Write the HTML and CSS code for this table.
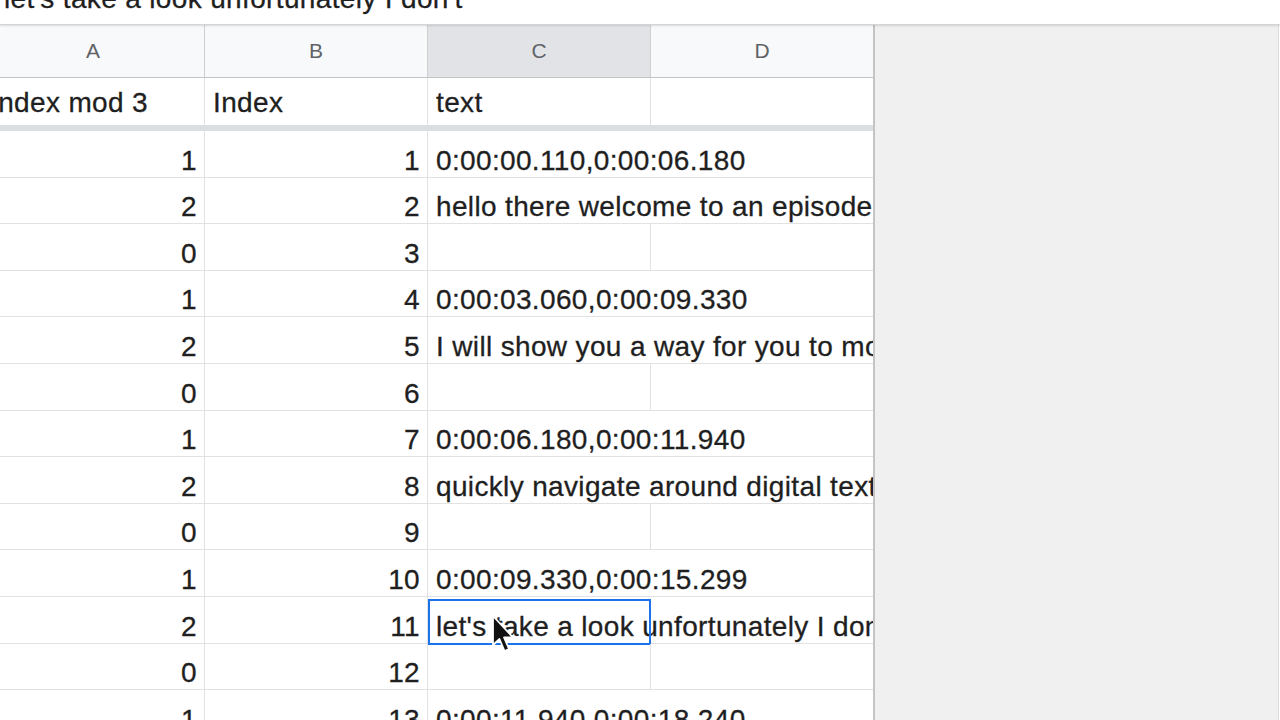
FILE: index.html
```html
<!DOCTYPE html>
<html>
<head>
<meta charset="utf-8">
<link rel="stylesheet" href="styles.css">
</head>
<body>
<div class="topbar"><div class="formula">let's take a look unfortunately I don't</div></div>
<div class="sheet">
  <div class="grid">
    <div class="row colhead"><div class="ch">A</div><div class="ch">B</div><div class="ch sel">C</div><div class="ch">D</div></div>
    <div class="row frozen"><div class="cell">Index mod 3</div><div class="cell">Index</div><div class="cell">text</div><div class="cell"></div></div>
    <div class="row"><div class="cell num">1</div><div class="cell num">1</div><div class="cell wide">0:00:00.110,0:00:06.180</div></div>
    <div class="row"><div class="cell num">2</div><div class="cell num">2</div><div class="cell wide">hello there welcome to an episode of</div></div>
    <div class="row"><div class="cell num">0</div><div class="cell num">3</div><div class="cell"></div><div class="cell"></div></div>
    <div class="row"><div class="cell num">1</div><div class="cell num">4</div><div class="cell wide">0:00:03.060,0:00:09.330</div></div>
    <div class="row"><div class="cell num">2</div><div class="cell num">5</div><div class="cell wide">I will show you a way for you to more</div></div>
    <div class="row"><div class="cell num">0</div><div class="cell num">6</div><div class="cell"></div><div class="cell"></div></div>
    <div class="row"><div class="cell num">1</div><div class="cell num">7</div><div class="cell wide">0:00:06.180,0:00:11.940</div></div>
    <div class="row"><div class="cell num">2</div><div class="cell num">8</div><div class="cell wide">quickly navigate around digital text</div></div>
    <div class="row"><div class="cell num">0</div><div class="cell num">9</div><div class="cell"></div><div class="cell"></div></div>
    <div class="row"><div class="cell num">1</div><div class="cell num">10</div><div class="cell wide">0:00:09.330,0:00:15.299</div></div>
    <div class="row"><div class="cell num">2</div><div class="cell num">11</div><div class="cell wide">let's take a look unfortunately I don't</div><div class="selbox"></div></div>
    <div class="row"><div class="cell num">0</div><div class="cell num">12</div><div class="cell"></div><div class="cell"></div></div>
    <div class="row"><div class="cell num">1</div><div class="cell num">13</div><div class="cell wide">0:00:11.940,0:00:18.240</div></div>
  </div>
  <div class="void"></div>
</div>
<svg class="cursor" width="24" height="40" viewBox="0 0 24 40">
  <path d="M2 2 L2 31 L8.5 25 L13.5 37 L18 35 L13 23.5 L22 23.5 Z" fill="#111" stroke="#fff" stroke-width="1.8" stroke-linejoin="round"/>
</svg>
</body>
</html>
```
FILE: styles.css
```css
html, body {
  margin: 0;
  padding: 0;
}
body {
  width: 1280px;
  height: 720px;
  overflow: hidden;
  position: relative;
  background: #fff;
  color: #1f1f1f;
  font-family: "Liberation Sans", Arial, sans-serif;
}
.topbar {
  height: 25px;
  box-sizing: border-box;
  border-bottom: 1px solid #d4d4d4;
  box-shadow: 0 1px 2px rgba(0, 0, 0, 0.12);
  overflow: hidden;
  position: relative;
  z-index: 1;
  background: #fff;
}
.formula {
  font-size: 28px;
  line-height: 32px;
  letter-spacing: 0.35px;
  margin-top: -17px;
  padding-left: 4px;
  white-space: nowrap;
  -webkit-text-stroke: 0.3px #1f1f1f;
}
.sheet {
  display: flex;
  height: 695px;
}
.grid {
  flex: none;
  width: 891px;
  margin-left: -18px;
  border-right: 2px solid #c4c4c4;
  background: #fff;
}
.void {
  flex: 1;
  background: #f0f0f0;
  border-right: 1px solid #dadada;
  margin-right: 1px;
}
.row {
  display: grid;
  grid-template-columns: 223px 223px 223px 222px;
  height: 46.6px;
  box-sizing: border-box;
  border-bottom: 1px solid #e2e2e2;
  position: relative;
}
.cell {
  box-sizing: border-box;
  border-right: 1px solid #e2e2e2;
  font-size: 28px;
  line-height: 32px;
  letter-spacing: 0.35px;
  padding: 0 7px 0 8px;
  display: flex;
  align-items: flex-end;
  white-space: nowrap;
  overflow: hidden;
  -webkit-text-stroke: 0.3px #1f1f1f;
}
.cell:last-child {
  border-right: none;
}
.num {
  justify-content: flex-end;
}
.wide {
  grid-column: span 2;
  border-right: none;
}
.colhead {
  height: 53px;
  background: #f8f9fa;
  border-bottom: 1px solid #c4c4c4;
}
.ch {
  box-sizing: border-box;
  border-right: 1px solid #d0d0d0;
  display: flex;
  align-items: center;
  justify-content: center;
  font-size: 21px;
  color: #5f6368;
}
.ch:last-child {
  border-right: none;
}
.ch.sel {
  background: #e1e3e6;
}
.frozen {
  height: 53px;
  border-bottom: 6px solid #dadde2;
}
.frozen .cell {
  padding-bottom: 6px;
}
.selbox {
  grid-column: 3;
  grid-row: 1;
  position: absolute;
  left: 0;
  top: 2px;
  width: 223px;
  height: 46px;
  box-sizing: border-box;
  border: 2px solid #1a73e8;
}
.cursor {
  position: absolute;
  left: 491px;
  top: 614px;
}
```
